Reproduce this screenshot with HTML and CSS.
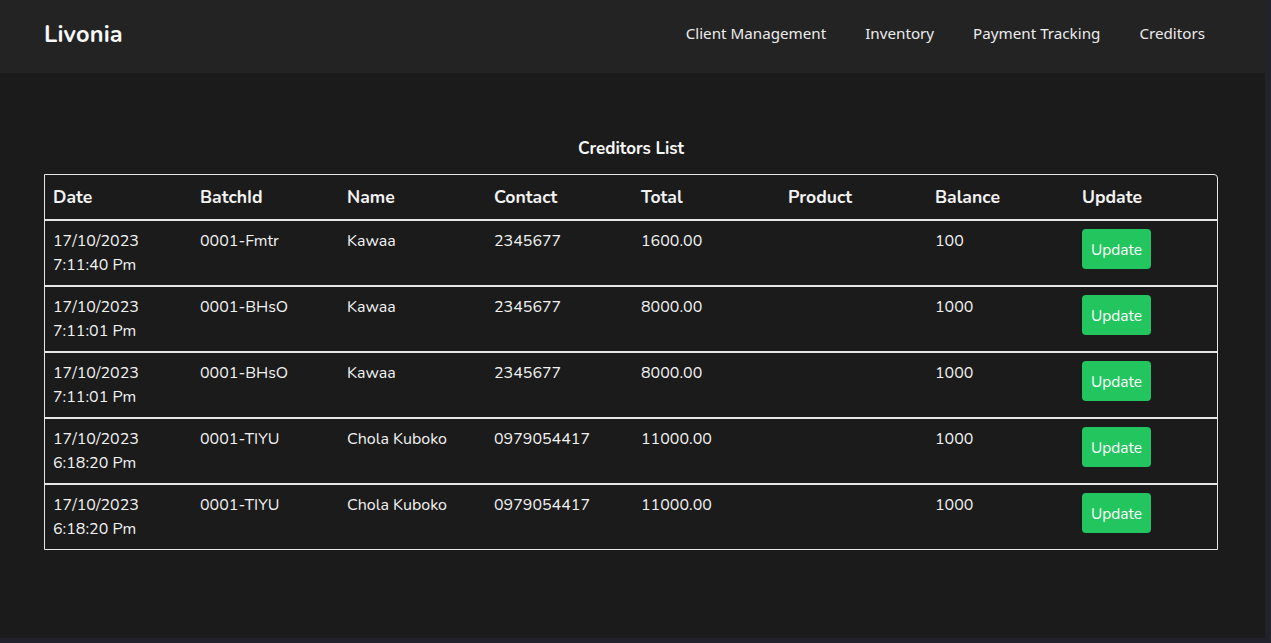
FILE: index.html
```html
<!DOCTYPE html>
<html>
<head>
<meta charset="utf-8">
<title>Livonia</title>
<link rel="stylesheet" href="styles.css">
</head>
<body>
<div class="frame">
  <header class="topbar">
    <div class="brand">Livonia</div>
    <nav class="nav">
      <a href="#">Client Management</a>
      <a href="#">Inventory</a>
      <a href="#">Payment Tracking</a>
      <a href="#">Creditors</a>
    </nav>
  </header>
  <main class="content">
    <h2 class="title">Creditors List</h2>
    <table class="grid">
      <thead>
        <tr><th>Date</th><th>BatchId</th><th>Name</th><th>Contact</th><th>Total</th><th>Product</th><th>Balance</th><th class="last">Update</th></tr>
      </thead>
      <tbody>
        <tr><td>17/10/2023<br>7:11:40 Pm</td><td>0001-Fmtr</td><td>Kawaa</td><td>2345677</td><td>1600.00</td><td></td><td>100</td><td><button class="btn">Update</button></td></tr>
        <tr><td>17/10/2023<br>7:11:01 Pm</td><td>0001-BHsO</td><td>Kawaa</td><td>2345677</td><td>8000.00</td><td></td><td>1000</td><td><button class="btn">Update</button></td></tr>
        <tr><td>17/10/2023<br>7:11:01 Pm</td><td>0001-BHsO</td><td>Kawaa</td><td>2345677</td><td>8000.00</td><td></td><td>1000</td><td><button class="btn">Update</button></td></tr>
        <tr><td>17/10/2023<br>6:18:20 Pm</td><td>0001-TIYU</td><td>Chola Kuboko</td><td>0979054417</td><td>11000.00</td><td></td><td>1000</td><td><button class="btn">Update</button></td></tr>
        <tr><td>17/10/2023<br>6:18:20 Pm</td><td>0001-TIYU</td><td>Chola Kuboko</td><td>0979054417</td><td>11000.00</td><td></td><td>1000</td><td><button class="btn">Update</button></td></tr>
      </tbody>
    </table>
  </main>
</div>
</body>
</html>
```
FILE: styles.css
```css
html, body {
  margin: 0;
  padding: 0;
  height: 100%;
  background: #22222c;
  overflow: hidden;
}
body {
  font-family: "Nunito", "Open Sans", sans-serif;
  color: #f2f2f2;
}
.frame {
  width: 1265px;
  height: 638px;
  background: #1b1b1b;
  display: flex;
  flex-direction: column;
}
.topbar {
  height: 73px;
  box-sizing: border-box;
  background: #232323;
  display: flex;
  align-items: center;
  justify-content: space-between;
  padding: 0 60px 7px 44px;
  flex-shrink: 0;
}
.brand {
  font-size: 23.5px;
  font-weight: 700;
  color: #f7f7f7;
  letter-spacing: 0.2px;
  margin-top: 1px;
}
.nav {
  display: flex;
  gap: 39px;
}
.nav a {
  color: #ececec;
  text-decoration: none;
  font-family: "Noto Sans", sans-serif;
  font-size: 15.2px;
}
.content {
  padding: 64px 47px 0 44px;
}
.title {
  margin: 0 0 13px;
  text-align: center;
  font-size: 17px;
  font-weight: 700;
  line-height: 24px;
  color: #f7f7f7;
}
.grid {
  width: 1174px;
  border-collapse: separate;
  border-spacing: 0;
  border: 1px solid #e6e6e6;
  border-top-right-radius: 4px;
  table-layout: fixed;
}
.grid th, .grid td {
  text-align: left;
  vertical-align: top;
  padding: 8px 8px;
  width: 131px;
}
.grid th.last {
  width: auto;
}
.grid th {
  font-size: 17.6px;
  font-weight: 700;
  line-height: 28px;
  border-bottom: 2px solid #e6e6e6;
}
.grid td {
  font-size: 16px;
  line-height: 24px;
  height: 48px;
  border-bottom: 2px solid #e6e6e6;
}
.grid tbody tr:last-child td {
  border-bottom: none;
}
.btn {
  display: block;
  background: #22c55e;
  color: #fff;
  border: none;
  border-radius: 4px;
  font-family: "Nunito", "Open Sans", sans-serif;
  font-size: 15.5px;
  width: 69px;
  height: 40px;
  padding: 0;
  margin: 0;
}
```
